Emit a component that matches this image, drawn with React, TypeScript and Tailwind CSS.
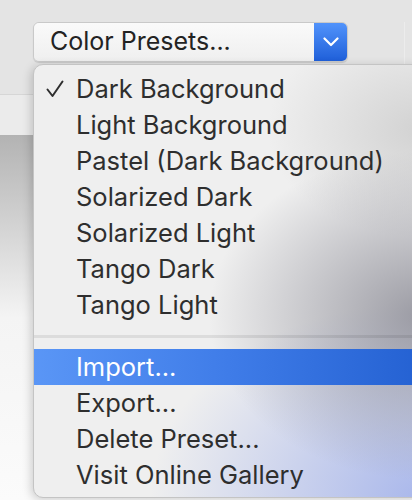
// ── Menu data ────────────────────────────────────────────────────────────────

const presets = [
  'Dark Background',
  'Light Background',
  'Pastel (Dark Background)',
  'Solarized Dark',
  'Solarized Light',
  'Tango Dark',
  'Tango Light',
];

const actions = ['Import...', 'Export...', 'Delete Preset...', 'Visit Online Gallery'];

function MenuItem({ label, checked, active }: { label: string; checked?: boolean; active?: boolean }) {
  return (
    <div
      className={
        active
          ? 'h-[36px] flex items-center bg-gradient-to-r from-[#5a96f6] via-[#3f7ce8] to-[#2461d2] text-white'
          : 'h-[36px] flex items-center text-[#2e2e2e]'
      }
    >
      <div className="w-[42px] h-full flex items-center pl-[12px]">
        {checked && (
          <svg width="18" height="18" viewBox="0 0 18 18" fill="none">
            <path d="M1.5 9.5 L6.5 16 L16.5 1.5" stroke="currentColor" strokeWidth="2" strokeLinecap="round" strokeLinejoin="round" />
          </svg>
        )}
      </div>
      <span className="leading-none">{label}</span>
    </div>
  );
}

export default function App() {
  return (
    <div
      className="relative w-[412px] h-[500px] overflow-hidden flex flex-col"
      style={{ fontFamily: 'Inter, "Noto Sans", sans-serif' }}
    >
      {/* Window toolbar area */}
      <div className="h-[95px] bg-[#e4e4e4] pt-[22px] pl-[33px] flex border-b border-[#d6d6d6]">
        <div className="w-[315px] h-[40px] flex rounded-[6px] border border-[#c9c9c9] shadow-[0_1px_1px_rgba(0,0,0,0.12)] overflow-hidden">
          <div className="flex-1 flex items-center pl-[16px] bg-gradient-to-b from-[#fafafa] to-[#efefef] text-[25px] text-[#232323]">
            Color Presets...
          </div>
          <div className="w-[33px] flex items-center justify-center bg-gradient-to-b from-[#5193fb] to-[#1f5fd9]">
            <svg width="16" height="10" viewBox="0 0 16 10" fill="none">
              <path d="M1.5 1.5 L8 8 L14.5 1.5" stroke="white" strokeWidth="2.2" strokeLinecap="round" strokeLinejoin="round" />
            </svg>
          </div>
        </div>
        <div className="ml-auto w-[8px] h-full border-l border-[#ececec]" />
      </div>

      {/* Tab strip */}
      <div className="h-[40px] bg-[#ebebeb]" />

      {/* Content behind the menu */}
      <div className="flex-1 bg-gradient-to-b from-[#b3b3b3] via-[#f4f4f4] to-[#fbfbfb]" />

      {/* Popup menu */}
      <div
        className="absolute left-[33px] top-[64px] right-[-12px] bottom-[2px] rounded-[10px] border border-[#c4c4c4] shadow-[-2px_2px_10px_rgba(0,0,0,0.18)] py-[6px] text-[25.5px] bg-[radial-gradient(ellipse_55%_38%_at_100%_58%,rgba(140,140,150,0.85),transparent),radial-gradient(ellipse_70%_45%_at_100%_100%,rgba(165,180,235,0.95),transparent),radial-gradient(ellipse_40%_25%_at_100%_15%,rgba(190,190,190,0.6),transparent)] bg-[#efefef]"
      >
        {presets.map((p, i) => (
          <MenuItem key={p} label={p} checked={i === 0} />
        ))}
        <div className="mt-[12px] mb-[11px] h-[3px] bg-[rgba(0,0,0,0.08)]" />
        {actions.map((a, i) => (
          <MenuItem key={a} label={a} active={i === 0} />
        ))}
      </div>
    </div>
  );
}
